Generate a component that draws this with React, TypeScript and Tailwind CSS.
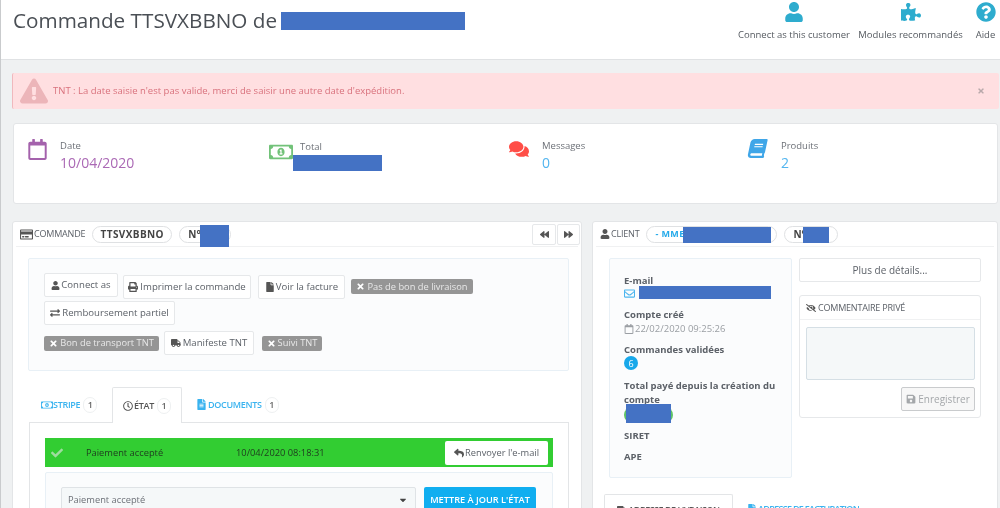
import React from "react";
import {
  FaUser, FaPuzzlePiece, FaQuestionCircle, FaExclamationTriangle, FaRegCalendar, FaRegMoneyBillAlt,
  FaComments, FaBook, FaRegCreditCard, FaPrint, FaFile, FaTimes, FaExchangeAlt, FaTruck, FaBackward,
  FaForward, FaRegClock, FaFileAlt, FaReply, FaCheck, FaRegEnvelope, FaEyeSlash, FaSave, FaCaretDown,
} from "react-icons/fa";

function Redact({ className }: { className: string }) {
  return <span className={"absolute bg-[#4472c4] " + className} />;
}

function Btn({ icon, label, className = "" }: { icon: React.ReactNode; label: string; className?: string }) {
  return (
    <span className={"inline-flex h-[24px] items-center justify-center gap-[1px] rounded-[2px] border border-[#e6e8ea] bg-white text-[9.6px] text-[#5c6168] " + className}>
      {icon}
      {label}
    </span>
  );
}

function Badge({ label, className = "" }: { label: string; className?: string }) {
  return (
    <span className={"inline-flex h-[15px] items-center justify-center gap-[2px] rounded-[2px] bg-[#959595] text-[9.3px] text-[#e8e8e8] " + className}>
      <FaTimes className="text-[9px] text-white" />
      {label}
    </span>
  );
}

function Stat({ icon, label, value, valueClass, className }: { icon: React.ReactNode; label: string; value?: string; valueClass?: string; className: string }) {
  return (
    <div className={"flex gap-[11px] " + className}>
      <div className="w-[22px] pt-[15px]">{icon}</div>
      <div className="pt-[15px]">
        <div className="text-[9.5px] leading-[14px] text-[#6c7077]">{label}</div>
        <div className={"h-[20px] text-[14px] leading-[20px] " + valueClass}>{value}</div>
      </div>
    </div>
  );
}

function TopLink({ icon, label, className }: { icon: React.ReactNode; label: string; className: string }) {
  return (
    <div className={"flex flex-col items-center " + className}>
      <div className="flex h-[21px] items-center text-[20px] text-[#2eacce]">{icon}</div>
      <div className="mt-[6px] text-[9.5px] leading-[14px] text-[#555a60]">{label}</div>
    </div>
  );
}

function Count({ n }: { n: string }) {
  return (
    <span className="ml-[3px] flex h-[16px] w-[14px] items-center justify-center rounded-full border border-[#eef0f1] bg-white text-[9px] text-[#666]">
      {n}
    </span>
  );
}

function Pill({ children, className }: { children: React.ReactNode; className: string }) {
  return (
    <span className={"flex h-[17px] items-center rounded-full border border-[#dfe1e3] bg-white " + className}>
      {children}
    </span>
  );
}

export default function App() {
  return (
    <div className="h-[508px] w-[1000px] overflow-hidden whitespace-nowrap border-l border-[#c9cbcd] bg-[#eff1f2] font-['Open_Sans',sans-serif] blur-[0.5px]">
      <header className="relative flex h-[60px] border-b border-[#e0e2e4] bg-white">
        <h1 className="pl-[12px] pt-[5px] text-[20.7px] leading-[30px] text-[#4a4f55]">Commande TTSVXBBNO de</h1>
        <Redact className="left-[280px] top-[12px] h-[18px] w-[184px]" />
        <div className="ml-auto flex pt-[1px]">
          <TopLink icon={<FaUser />} label="Connect as this customer" className="w-[110px]" />
          <TopLink icon={<FaPuzzlePiece />} label="Modules recommandés" className="ml-[10px] w-[103px]" />
          <TopLink icon={<FaQuestionCircle />} label="Aide" className="ml-[14px] mr-[5px] w-[19px]" />
        </div>
      </header>

      <div className="ml-[11px] mr-[1px] mt-[13px] flex h-[36px] items-center rounded-[2px] border-l border-[#f0b8bd] bg-[#ffdfe1] pl-[7px] pr-[14px]">
        <FaExclamationTriangle className="text-[28px] text-[#ecb5b9]" />
        <span className="ml-[5px] text-[9.5px] text-[#d9727d]">TNT : La date saisie n'est pas valide, merci de saisir une autre date d'expédition.</span>
        <FaTimes className="ml-auto text-[8px] text-[#b9a9ab]" />
      </div>

      <section className="relative ml-[12px] mr-[2px] mt-[14px] flex h-[81px] rounded-[3px] border border-[#e3e5e7] bg-white">
        <Stat className="w-[240px] pl-[13px]" icon={<FaRegCalendar className="text-[21px] text-[#a462ac]" />} label="Date" value="10/04/2020" valueClass="text-[#ab69b5]" />
        <div className="flex w-[240px] gap-[7px] pt-[16px]">
          <FaRegMoneyBillAlt className="ml-[15px] text-[24px] leading-none text-[#72c279]" />
          <span className="text-[9.5px] leading-[14px] text-[#6c7077]">Total</span>
        </div>
        <Redact className="left-[279px] top-[31px] h-[16px] w-[89px]" />
        <Stat className="w-[240px] pl-[15px]" icon={<FaComments className="text-[20px] text-[#ff4e47]" />} label="Messages" value="0" valueClass="text-[#53b5ef]" />
        <Stat className="w-[240px] pl-[14px]" icon={<FaBook className="-skew-x-12 text-[19px] text-[#3fa6e8]" />} label="Produits" value="2" valueClass="text-[#53b5ef]" />
      </section>

      <div className="ml-[11px] mt-[17px] flex items-start">
        <section className="relative h-[300px] w-[570px] rounded-[3px] border border-[#e3e5e7] bg-white px-[3px]">
          <div className="flex h-[25px] items-center border-b border-[#f0f1f2] pl-[4px] text-[9px] text-[#5c6168]">
            <FaRegCreditCard className="text-[13px] text-[#555]" />
            <span className="ml-[1px] tracking-[-0.2px]">COMMANDE</span>
            <Pill className="ml-[7px] w-[80px] justify-center text-[10px] font-bold tracking-[0.4px] text-[#444]">TTSVXBBNO</Pill>
            <Pill className="ml-[7px] w-[52px] pl-[8px] text-[10px] font-bold text-[#444]">N°</Pill>
            <div className="-mr-[2px] ml-auto flex gap-[1px]">
              <span className="flex h-[21px] w-[24px] items-center justify-center rounded-[2px] border border-[#e6e8ea] text-[9px] text-[#555]"><FaBackward /></span>
              <span className="flex h-[21px] w-[23px] items-center justify-center rounded-[2px] border border-[#e6e8ea] text-[9px] text-[#555]"><FaForward /></span>
            </div>
          </div>
          <Redact className="left-[187px] top-[3px] h-[22px] w-[29px]" />

          <div className="ml-[12px] mr-[9px] mt-[11px] h-[113px] rounded-[2px] border border-[#e8f0f6] bg-[#fbfcfd] pl-[15px] pt-[14px]">
            <div className="flex items-start">
              <Btn icon={<FaUser className="text-[9px] text-[#555]" />} label="Connect as" className="w-[74px]" />
              <Btn icon={<FaPrint className="mr-[1px] text-[10px] text-[#555]" />} label="Imprimer la commande" className="ml-[5px] mt-[2px] w-[128px]" />
              <Btn icon={<FaFile className="text-[10px] text-[#555]" />} label="Voir la facture" className="ml-[7px] mt-[2px] w-[87px]" />
              <Badge label="Pas de bon de livraison" className="ml-[6px] mt-[6px] w-[122px]" />
            </div>
            <div className="mt-[2px] flex">
              <Btn icon={<FaExchangeAlt className="mr-[1px] text-[10px] text-[#555]" />} label="Remboursement partiel" className="w-[131px]" />
            </div>
            <div className="mt-[6px] flex items-center">
              <Badge label="Bon de transport TNT" className="w-[115px]" />
              <Btn icon={<FaTruck className="mr-[1px] text-[10px] text-[#555]" />} label="Manifeste TNT" className="ml-[5px] w-[90px]" />
              <Badge label="Suivi TNT" className="ml-[8px] w-[60px]" />
            </div>
          </div>

          <div className="ml-[13px] mt-[15px] flex h-[36px] items-end pl-[12px]">
            <div className="flex h-[35px] w-[71px] items-center text-[9px] font-semibold text-[#39b3ef]">
              <FaRegMoneyBillAlt className="text-[12px]" />
              <span className="tracking-[-0.3px]">STRIPE</span>
              <Count n="1" />
            </div>
            <div className="-mb-px flex h-[36px] w-[70px] items-center justify-center rounded-t-[2px] border border-b-0 border-[#e3e5e7] bg-white text-[9px] font-semibold text-[#555]">
              <FaRegClock className="text-[10px]" />
              <span className="ml-[1px] tracking-[-0.3px]">ÉTAT</span>
              <Count n="1" />
            </div>
            <div className="ml-[14px] flex h-[35px] items-center text-[9px] font-semibold text-[#39b3ef]">
              <FaFileAlt className="text-[11px]" />
              <span className="ml-[1px] tracking-[-0.3px]">DOCUMENTS</span>
              <Count n="1" />
            </div>
          </div>

          <div className="ml-[13px] mr-[9px] h-[90px] border border-[#e3e5e7] px-[15px] pt-[15px]">
            <div className="flex h-[29px] items-center bg-[#32cd32] pl-[6px] pr-[5px] text-[9.3px] text-[#1f3a1f]">
              <FaCheck className="text-[12px] text-[#9fdc9f]" />
              <span className="ml-[23px] w-[150px]">Paiement accepté</span>
              <span>10/04/2020 08:18:31</span>
              <span className="ml-auto flex h-[24px] w-[103px] items-center justify-center gap-[1px] rounded-[2px] bg-white text-[#5c6168]">
                <FaReply className="text-[10px] text-[#555]" />Renvoyer l'e-mail
              </span>
            </div>
            <div className="mt-[5px] flex h-[60px] gap-[8px] rounded-[2px] border border-[#e8f0f6] bg-[#fbfcfd] pl-[15px] pt-[14px]">
              <span className="flex h-[26px] w-[355px] items-center rounded-[2px] border border-[#dfe3e6] bg-[#f5f8f9] pl-[6px] pr-[7px] text-[9.3px] text-[#6c7077]">
                Paiement accepté
                <FaCaretDown className="ml-auto text-[10px] text-[#444]" />
              </span>
              <span className="flex h-[26px] w-[112px] items-center justify-center rounded-[2px] bg-[#10aef0] text-[9.2px] font-semibold text-white">METTRE À JOUR L'ÉTAT</span>
            </div>
          </div>
        </section>

        <section className="relative ml-[10px] h-[300px] w-[406px] rounded-[3px] border border-[#e3e5e7] bg-white px-[3px]">
          <div className="flex h-[25px] items-center border-b border-[#f0f1f2] pl-[4px] text-[9px] text-[#5c6168]">
            <FaUser className="text-[10px] text-[#555]" />
            <span className="ml-[1px] tracking-[-0.2px]">CLIENT</span>
            <Pill className="ml-[7px] w-[131px] pl-[8px] text-[9px] font-bold tracking-[0.4px] text-[#25aaea]">- MME</Pill>
            <Pill className="ml-[7px] w-[54px] pl-[8px] text-[10px] font-bold text-[#444]">N°</Pill>
          </div>
          <Redact className="left-[90px] top-[5px] h-[16px] w-[88px]" />
          <Redact className="left-[210px] top-[5px] h-[16px] w-[26px]" />

          <div className="ml-[13px] mt-[11px] flex items-start">
            <div className="relative h-[220px] w-[183px] rounded-[2px] border border-[#e8f0f6] bg-[#fbfcfd] pl-[14px] pt-[15px] text-[9.5px] leading-[13px]">
              <div className="font-bold text-[#5c6168]">E-mail</div>
              <FaRegEnvelope className="mt-[1px] text-[11px] text-[#4db5ee]" />
              <Redact className="left-[29px] top-[27px] h-[13px] w-[132px]" />
              <div className="mt-[9px] font-bold text-[#5c6168]">Compte créé</div>
              <div className="mt-[1px] flex items-center gap-[1px] text-[#9a9ea3]">
                <FaRegCalendar className="text-[10px]" />22/02/2020 09:25:26
              </div>
              <div className="mt-[8px] font-bold text-[#5c6168]">Commandes validées</div>
              <span className="flex h-[14px] w-[14px] items-center justify-center rounded-full bg-[#18a8ea] text-[9px] text-white">6</span>
              <div className="mt-[9px] whitespace-normal pr-[2px] font-bold leading-[14px] text-[#5c6168]">Total payé depuis la création du compte</div>
              <span className="block h-[16px] w-[49px] rounded-full bg-[#5fc465]" />
              <Redact className="left-[16px] top-[145px] h-[19px] w-[45px]" />
              <div className="mt-[6px] font-bold text-[#5c6168]">SIRET</div>
              <div className="mt-[8px] font-bold text-[#5c6168]">APE</div>
            </div>

            <div className="ml-[7px]">
              <div className="flex h-[24px] w-[182px] items-center justify-center rounded-[2px] border border-[#e6e8ea] text-[10px] text-[#5c6168]">Plus de détails...</div>
              <div className="mt-[13px] h-[123px] w-[182px] rounded-[3px] border border-[#e6e8ea]">
                <div className="flex h-[24px] items-center border-b border-[#f0f1f2] pl-[6px] text-[9px] text-[#5c6168]">
                  <FaEyeSlash className="text-[10px] text-[#555]" />
                  <span className="ml-[2px] tracking-[-0.2px]">COMMENTAIRE PRIVÉ</span>
                </div>
                <div className="ml-[6px] mt-[7px] h-[53px] w-[169px] rounded-[2px] border border-[#d5dfe5] bg-[#f5f8f9]" />
                <div className="ml-[101px] mt-[7px] flex h-[24px] w-[74px] items-center justify-center gap-[2px] rounded-[2px] border border-[#c9cbcd] bg-[#f7f7f7] text-[10px] text-[#a4a7aa]">
                  <FaSave className="text-[10px]" />Enregistrer
                </div>
              </div>
            </div>
          </div>

          <div className="ml-[8px] mt-[16px] flex">
            <div className="flex h-[30px] w-[129px] items-center justify-center gap-[1px] rounded-t-[2px] border border-b-0 border-[#e3e5e7] pt-[1px] text-[9px] font-semibold tracking-[-0.5px] text-[#555]">
              <FaTruck className="text-[10px]" />ADRESSE DE LIVRAISON
            </div>
            <div className="ml-[14px] flex h-[30px] items-center gap-[1px] text-[9px] font-semibold tracking-[-0.7px] text-[#39b3ef]">
              <FaFile className="text-[10px]" />ADRESSE DE FACTURATION
            </div>
          </div>
        </section>
      </div>
    </div>
  );
}
